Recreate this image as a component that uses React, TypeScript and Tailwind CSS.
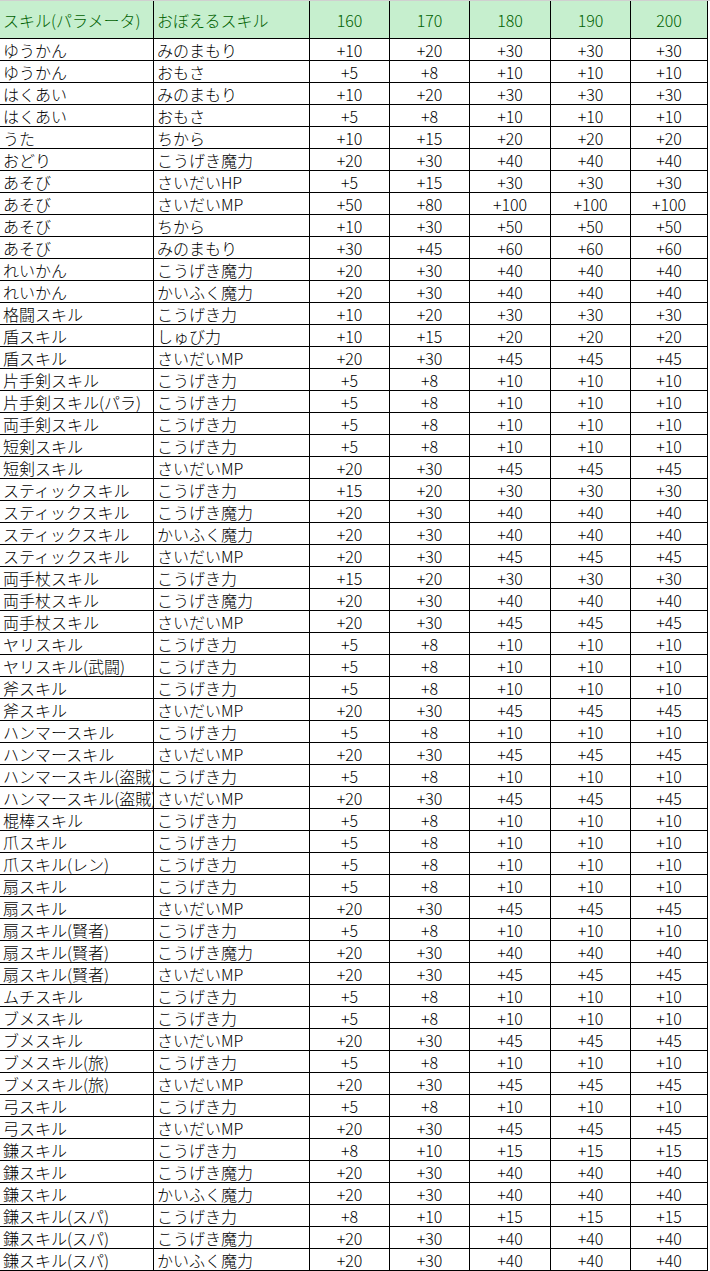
import React from 'react';

type Row = [string, string, string, string, string, string, string];

const rows: Row[] = [
  ['ゆうかん', 'みのまもり', '+10', '+20', '+30', '+30', '+30'],
  ['ゆうかん', 'おもさ', '+5', '+8', '+10', '+10', '+10'],
  ['はくあい', 'みのまもり', '+10', '+20', '+30', '+30', '+30'],
  ['はくあい', 'おもさ', '+5', '+8', '+10', '+10', '+10'],
  ['うた', 'ちから', '+10', '+15', '+20', '+20', '+20'],
  ['おどり', 'こうげき魔力', '+20', '+30', '+40', '+40', '+40'],
  ['あそび', 'さいだいHP', '+5', '+15', '+30', '+30', '+30'],
  ['あそび', 'さいだいMP', '+50', '+80', '+100', '+100', '+100'],
  ['あそび', 'ちから', '+10', '+30', '+50', '+50', '+50'],
  ['あそび', 'みのまもり', '+30', '+45', '+60', '+60', '+60'],
  ['れいかん', 'こうげき魔力', '+20', '+30', '+40', '+40', '+40'],
  ['れいかん', 'かいふく魔力', '+20', '+30', '+40', '+40', '+40'],
  ['格闘スキル', 'こうげき力', '+10', '+20', '+30', '+30', '+30'],
  ['盾スキル', 'しゅび力', '+10', '+15', '+20', '+20', '+20'],
  ['盾スキル', 'さいだいMP', '+20', '+30', '+45', '+45', '+45'],
  ['片手剣スキル', 'こうげき力', '+5', '+8', '+10', '+10', '+10'],
  ['片手剣スキル(パラ)', 'こうげき力', '+5', '+8', '+10', '+10', '+10'],
  ['両手剣スキル', 'こうげき力', '+5', '+8', '+10', '+10', '+10'],
  ['短剣スキル', 'こうげき力', '+5', '+8', '+10', '+10', '+10'],
  ['短剣スキル', 'さいだいMP', '+20', '+30', '+45', '+45', '+45'],
  ['スティックスキル', 'こうげき力', '+15', '+20', '+30', '+30', '+30'],
  ['スティックスキル', 'こうげき魔力', '+20', '+30', '+40', '+40', '+40'],
  ['スティックスキル', 'かいふく魔力', '+20', '+30', '+40', '+40', '+40'],
  ['スティックスキル', 'さいだいMP', '+20', '+30', '+45', '+45', '+45'],
  ['両手杖スキル', 'こうげき力', '+15', '+20', '+30', '+30', '+30'],
  ['両手杖スキル', 'こうげき魔力', '+20', '+30', '+40', '+40', '+40'],
  ['両手杖スキル', 'さいだいMP', '+20', '+30', '+45', '+45', '+45'],
  ['ヤリスキル', 'こうげき力', '+5', '+8', '+10', '+10', '+10'],
  ['ヤリスキル(武闘)', 'こうげき力', '+5', '+8', '+10', '+10', '+10'],
  ['斧スキル', 'こうげき力', '+5', '+8', '+10', '+10', '+10'],
  ['斧スキル', 'さいだいMP', '+20', '+30', '+45', '+45', '+45'],
  ['ハンマースキル', 'こうげき力', '+5', '+8', '+10', '+10', '+10'],
  ['ハンマースキル', 'さいだいMP', '+20', '+30', '+45', '+45', '+45'],
  ['ハンマースキル(盗賊)', 'こうげき力', '+5', '+8', '+10', '+10', '+10'],
  ['ハンマースキル(盗賊)', 'さいだいMP', '+20', '+30', '+45', '+45', '+45'],
  ['棍棒スキル', 'こうげき力', '+5', '+8', '+10', '+10', '+10'],
  ['爪スキル', 'こうげき力', '+5', '+8', '+10', '+10', '+10'],
  ['爪スキル(レン)', 'こうげき力', '+5', '+8', '+10', '+10', '+10'],
  ['扇スキル', 'こうげき力', '+5', '+8', '+10', '+10', '+10'],
  ['扇スキル', 'さいだいMP', '+20', '+30', '+45', '+45', '+45'],
  ['扇スキル(賢者)', 'こうげき力', '+5', '+8', '+10', '+10', '+10'],
  ['扇スキル(賢者)', 'こうげき魔力', '+20', '+30', '+40', '+40', '+40'],
  ['扇スキル(賢者)', 'さいだいMP', '+20', '+30', '+45', '+45', '+45'],
  ['ムチスキル', 'こうげき力', '+5', '+8', '+10', '+10', '+10'],
  ['ブメスキル', 'こうげき力', '+5', '+8', '+10', '+10', '+10'],
  ['ブメスキル', 'さいだいMP', '+20', '+30', '+45', '+45', '+45'],
  ['ブメスキル(旅)', 'こうげき力', '+5', '+8', '+10', '+10', '+10'],
  ['ブメスキル(旅)', 'さいだいMP', '+20', '+30', '+45', '+45', '+45'],
  ['弓スキル', 'こうげき力', '+5', '+8', '+10', '+10', '+10'],
  ['弓スキル', 'さいだいMP', '+20', '+30', '+45', '+45', '+45'],
  ['鎌スキル', 'こうげき力', '+8', '+10', '+15', '+15', '+15'],
  ['鎌スキル', 'こうげき魔力', '+20', '+30', '+40', '+40', '+40'],
  ['鎌スキル', 'かいふく魔力', '+20', '+30', '+40', '+40', '+40'],
  ['鎌スキル(スパ)', 'こうげき力', '+8', '+10', '+15', '+15', '+15'],
  ['鎌スキル(スパ)', 'こうげき魔力', '+20', '+30', '+40', '+40', '+40'],
  ['鎌スキル(スパ)', 'かいふく魔力', '+20', '+30', '+40', '+40', '+40'],
];

const header = ['スキル(パラメータ)', 'おぼえるスキル', '160', '170', '180', '190', '200'];

const grid = 'grid grid-cols-[154px_156px_80px_80px_81px_80px_77px] w-[708px]';

export default function App() {
  return (
    <div
      className="w-[710px] bg-white text-[16px] font-light text-black border-t border-[#d0d0d0]"
      style={{ fontFamily: '"Noto Sans CJK JP", "Noto Sans", sans-serif' }}
    >
      {/* header */}
      <div className={`${grid} h-[38px] bg-[#c6efce] text-[#006100]`}>
        {header.map((h, i) => (
          <div
            key={i}
            className={`flex items-center border-r border-b border-black whitespace-nowrap overflow-hidden ${
              i < 2 ? 'pl-[3px]' : 'justify-center'
            }`}
          >
            {h}
          </div>
        ))}
      </div>
      {/* body */}
      {rows.map((r, ri) => (
        <div key={ri} className={`${grid} h-[22px]`}>
          {r.map((c, ci) => (
            <div
              key={ci}
              className={`flex items-center border-r border-b border-black whitespace-nowrap overflow-hidden leading-none ${
                ci < 2 ? 'pl-[3px]' : 'justify-center'
              }`}
            >
              {c}
            </div>
          ))}
        </div>
      ))}
    </div>
  );
}
